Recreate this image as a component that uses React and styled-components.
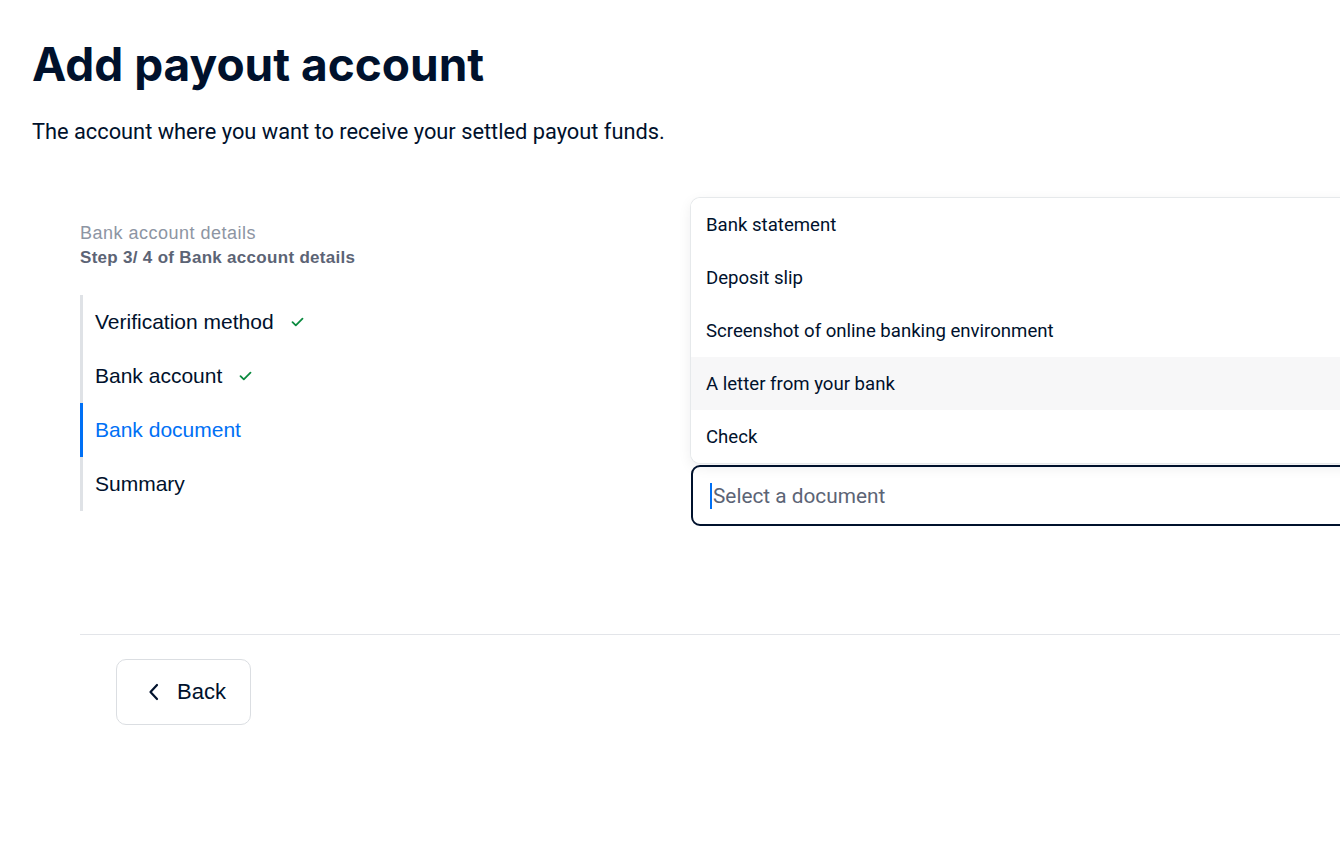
import React from "react";
import styled, { createGlobalStyle } from "styled-components";

const GlobalStyle = createGlobalStyle`
  html, body {
    margin: 0;
    padding: 0;
    background: #ffffff;
    overflow: hidden;
  }
  body {
    font-family: "Liberation Sans", Arial, sans-serif;
    color: #00112c;
  }
`;

const steps = [
  { label: "Verification method", done: true },
  { label: "Bank account", done: true },
  { label: "Bank document", active: true },
  { label: "Summary" },
];

const documents = [
  "Bank statement",
  "Deposit slip",
  "Screenshot of online banking environment",
  "A letter from your bank",
  "Check",
];

function CheckIcon() {
  return (
    <svg width="13" height="10" viewBox="0 0 13 10" fill="none">
      <path
        d="M1.5 5.2L4.8 8.3L11.5 1.7"
        stroke="#0a8a3f"
        strokeWidth="1.8"
        strokeLinecap="round"
        strokeLinejoin="round"
      />
    </svg>
  );
}

function ChevronLeft() {
  return (
    <svg width="12" height="18" viewBox="0 0 12 18" fill="none">
      <path
        d="M9 2L2.5 9L9 16"
        stroke="#00112c"
        strokeWidth="2.2"
        strokeLinecap="round"
        strokeLinejoin="round"
      />
    </svg>
  );
}

function App() {
  return (
    <Page>
      <GlobalStyle />
      <Title>Add payout account</Title>
      <Subtitle>The account where you want to receive your settled payout funds.</Subtitle>
      <Body>
        <Columns>
          <Sidebar>
            <Section>Bank account details</Section>
            <StepCount>Step 3/ 4 of Bank account details</StepCount>
            <StepList>
              {steps.map((s) => (
                <Step key={s.label} $active={s.active}>
                  {s.label}
                  {s.done && <CheckIcon />}
                </Step>
              ))}
            </StepList>
          </Sidebar>
          <Field>
            <Menu>
              {documents.map((d, i) => (
                <Option key={d} $hover={i === 3}>
                  {d}
                </Option>
              ))}
            </Menu>
            <Input>
              <Caret />
              Select a document
            </Input>
          </Field>
        </Columns>
        <Footer>
          <BackButton>
            <ChevronLeft />
            Back
          </BackButton>
        </Footer>
      </Body>
    </Page>
  );
}

export default App;

const Page = styled.div`
  width: 1340px;
  height: 858px;
  padding: 36px 0 0 32px;
  box-sizing: border-box;
  overflow: hidden;
`;

const Title = styled.h1`
  margin: 0;
  font-family: Inter, "Liberation Sans", sans-serif;
  font-size: 46px;
  font-weight: 700;
  letter-spacing: 0;
  line-height: 56px;
  color: #00112c;
`;

const Subtitle = styled.p`
  margin: 26px 0 0;
  font-family: Roboto, "Liberation Sans", sans-serif;
  font-size: 21.8px;
  line-height: 28px;
  color: #00112c;
`;

const Body = styled.div`
  margin: 52px 0 0 48px;
  width: 1400px;
`;

const Columns = styled.div`
  display: grid;
  grid-template-columns: 611px 700px;
  height: 436px;
`;

const Sidebar = styled.div`
  padding-top: 23px;
`;

const Section = styled.div`
  font-size: 18px;
  letter-spacing: 0.5px;
  line-height: 24px;
  color: #8d95a3;
`;

const StepCount = styled.div`
  font-size: 17px;
  font-weight: 700;
  letter-spacing: 0.3px;
  line-height: 26px;
  color: #5c6475;
`;

const StepList = styled.ul`
  list-style: none;
  margin: 24px 0 0;
  padding: 0;
  border-left: 3px solid #dfe2e6;
`;

const Step = styled.li`
  display: flex;
  align-items: center;
  gap: 17px;
  height: 54px;
  margin-left: -3px;
  padding-left: 12px;
  border-left: 3px solid ${(p) => (p.$active ? "#0070f5" : "transparent")};
  font-size: 21px;
  color: ${(p) => (p.$active ? "#0070f5" : "#00112c")};
`;

const Field = styled.div`
  display: flex;
  flex-direction: column;
  gap: 2px;
`;

const Menu = styled.div`
  border-radius: 9px;
  box-shadow: 0 0 0 1px #e6e9eb, 0 4px 14px rgba(0, 17, 44, 0.08);
  overflow: hidden;
  background: #fff;
`;

const Option = styled.div`
  height: 53px;
  display: flex;
  align-items: center;
  padding-left: 15px;
  font-family: Roboto, "Liberation Sans", sans-serif;
  font-size: 18.6px;
  color: #00112c;
  background: ${(p) => (p.$hover ? "#f7f7f8" : "#fff")};
`;

const Input = styled.div`
  height: 61px;
  box-sizing: border-box;
  border: 2px solid #00112c;
  border-radius: 9px;
  display: flex;
  align-items: center;
  padding-left: 17px;
  font-family: Roboto, "Liberation Sans", sans-serif;
  font-size: 20.8px;
  color: #5c6475;
`;

const Caret = styled.span`
  width: 2px;
  height: 26px;
  background: #0070f5;
  margin-right: 1px;
`;

const Footer = styled.div`
  border-top: 1px solid #e3e5e9;
  padding: 24px 0 0 36px;
`;

const BackButton = styled.button`
  display: flex;
  align-items: center;
  gap: 17px;
  height: 66px;
  padding: 0 24px 0 31px;
  background: #fff;
  border: 1px solid #dbdee2;
  border-radius: 10px;
  font-family: "Liberation Sans", Arial, sans-serif;
  font-size: 22px;
  color: #00112c;
  cursor: pointer;
`;
